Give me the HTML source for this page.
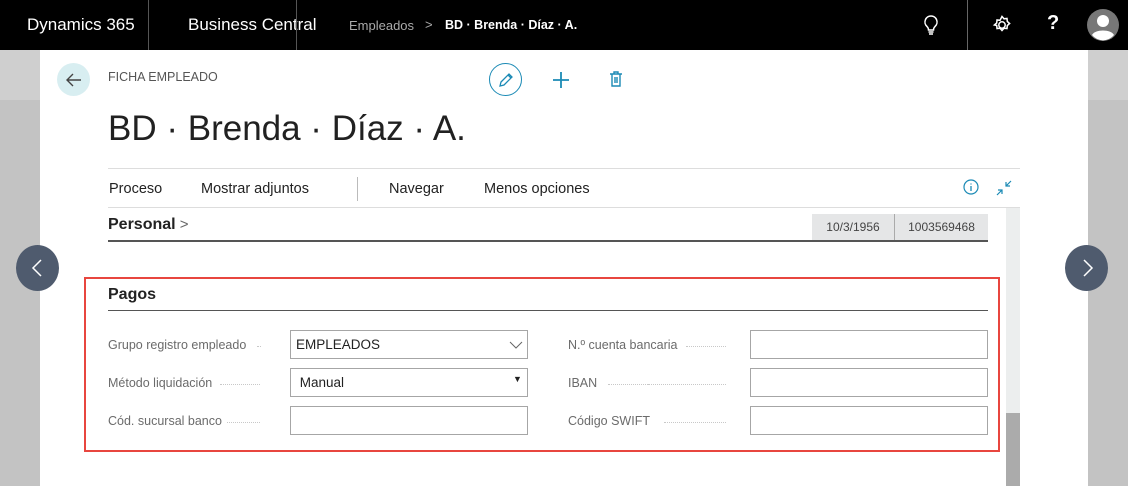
<!DOCTYPE html>
<html><head><meta charset="utf-8"><style>
*{margin:0;padding:0;box-sizing:border-box}
body{width:1128px;height:486px;overflow:hidden;font-family:"Liberation Sans",sans-serif;background:#c3c3c3;position:relative}
.a{position:absolute}
.top{left:0;top:0;width:1128px;height:50px;background:#000;color:#fff}
.card{left:40px;top:50px;width:1048px;height:436px;background:#fff}
.lbl{font-size:12.5px;color:#6b6b6b;white-space:nowrap}
.dots{border-bottom:1.5px dotted #c8c8c8;height:1px}
.inp{border:1px solid #a6a6a6;height:29px;background:#fff;font-size:13.5px;color:#222;padding:6px 5px}
</style></head><body>
<div class="a" style="left:0;top:50px;width:40px;height:50px;background:#cfcfcf"></div>
<div class="a" style="left:1088px;top:50px;width:40px;height:50px;background:#cfcfcf"></div>
<div class="a top">
  <div class="a" style="left:27px;top:15px;font-size:17px">Dynamics 365</div>
  <div class="a" style="left:148px;top:0;width:1px;height:50px;background:#555"></div>
  <div class="a" style="left:188px;top:15px;font-size:17px">Business Central</div>
  <div class="a" style="left:296px;top:0;width:1px;height:50px;background:#555"></div>
  <div class="a" style="left:349px;top:18px;font-size:13px;color:#aaa">Empleados</div>
  <div class="a" style="left:425px;top:17px;font-size:13px;color:#aaa">&gt;</div>
  <div class="a" style="left:445px;top:18px;font-size:12.5px;font-weight:bold">BD · Brenda · Díaz · A.</div>
  <svg class="a" style="left:922px;top:14px" width="18" height="22" viewBox="0 0 18 22"><path d="M9 2a6 6 0 0 0-4 10.5c1 1 1.5 2 1.5 3.5h5c0-1.5.5-2.5 1.5-3.5A6 6 0 0 0 9 2z M6.5 18h5 M7 20h4" fill="none" stroke="#fff" stroke-width="1.5"/></svg>
  <div class="a" style="left:967px;top:0;width:1px;height:50px;background:#666"></div>
  <svg class="a" style="left:992px;top:15px" width="20" height="20" viewBox="0 0 20 20"><path d="M10 1.5l2 2.3 3-.3.3 3 2.3 2-2.3 2-.3 3-3-.3-2 2.3-2-2.3-3 .3-.3-3L2.4 10 4.7 8 5 5l3 .3z" fill="none" stroke="#fff" stroke-width="1.5"/><circle cx="10" cy="10" r="3.2" fill="none" stroke="#fff" stroke-width="1.5"/></svg>
  <div class="a" style="left:1047px;top:12px;font-size:20px;font-weight:bold">?</div>
  <svg class="a" style="left:1087px;top:9px" width="32" height="32" viewBox="0 0 32 32"><circle cx="16" cy="16" r="16" fill="#777"/><circle cx="16" cy="12" r="6" fill="#fff"/><path d="M5 26c3-6 19-6 22 0a14 14 0 0 1-22 0z" fill="#fff"/></svg>
</div>
<div class="a card">
  <div class="a" style="left:17px;top:13px;width:33px;height:33px;border-radius:50%;background:#d8eef1"></div>
  <svg class="a" style="left:24px;top:20px" width="20" height="20" viewBox="0 0 20 20"><path d="M17 10H3M9 4l-6 6 6 6" fill="none" stroke="#444" stroke-width="1.4"/></svg>
  <div class="a" style="left:68px;top:20px;font-size:12.5px;color:#555">FICHA EMPLEADO</div>
  <div class="a" style="left:449px;top:13px;width:33px;height:33px;border-radius:50%;border:1.5px solid #1b8ab5"></div>
  <svg class="a" style="left:457px;top:21px" width="18" height="18" viewBox="0 0 18 18"><path d="M3 15l1-4 8-8 3 3-8 8z M11 4l3 3" fill="none" stroke="#1b8ab5" stroke-width="1.3"/></svg>
  <svg class="a" style="left:512px;top:21px" width="18" height="18" viewBox="0 0 18 18"><path d="M9 1v16M1 9h16" stroke="#1b8ab5" stroke-width="1.8"/></svg>
  <svg class="a" style="left:568px;top:20px" width="16" height="18" viewBox="0 0 16 18"><path d="M2 4h12M6 4V2h4v2M4 4v12h8V4M7 7v6M9 7v6" fill="none" stroke="#1b8ab5" stroke-width="1.4"/></svg>
  <div class="a" style="left:68px;top:59px;font-size:35px;color:#212121">BD · Brenda · Díaz · A.</div>
  <div class="a" style="left:68px;top:118px;width:912px;height:1px;background:#ddd"></div>
  <div class="a" style="left:69px;top:131px;font-size:14.5px;color:#222">Proceso</div>
  <div class="a" style="left:161px;top:131px;font-size:14.5px;color:#222">Mostrar adjuntos</div>
  <div class="a" style="left:317px;top:127px;width:1px;height:24px;background:#bbb"></div>
  <div class="a" style="left:349px;top:131px;font-size:14.5px;color:#222">Navegar</div>
  <div class="a" style="left:444px;top:131px;font-size:14.5px;color:#222">Menos opciones</div>
  <svg class="a" style="left:923px;top:129px" width="16" height="16" viewBox="0 0 16 16"><circle cx="8" cy="8" r="7" fill="none" stroke="#1b8ab5" stroke-width="1.2"/><path d="M8 7v5M8 4.5v1" stroke="#1b8ab5" stroke-width="1.3"/></svg>
  <svg class="a" style="left:955px;top:129px" width="18" height="18" viewBox="0 0 18 18"><path d="M2 16l5-5M3 11h4v4M16 2l-5 5M11 3v4h4" fill="none" stroke="#1b8ab5" stroke-width="1.2"/></svg>
  <div class="a" style="left:68px;top:157px;width:912px;height:1px;background:#ddd"></div>
  <div class="a" style="left:966px;top:158px;width:14px;height:278px;background:#eceeee"></div>
  <div class="a" style="left:966px;top:363px;width:14px;height:73px;background:#ababab"></div>
  <div class="a" style="left:68px;top:166px;font-size:16px;font-weight:bold;color:#222">Personal<span style="font-weight:normal;color:#666;font-size:15px"> &gt;</span></div>
  <div class="a" style="left:772px;top:164px;width:82px;height:26px;background:#e5e6e7;font-size:12px;color:#444;text-align:center;line-height:26px">10/3/1956</div>
  <div class="a" style="left:854px;top:164px;width:1px;height:26px;background:#aaa"></div>
  <div class="a" style="left:855px;top:164px;width:93px;height:26px;background:#e5e6e7;font-size:12px;color:#444;text-align:center;line-height:26px">1003569468</div>
  <div class="a" style="left:68px;top:190px;width:880px;height:2px;background:#555"></div>
  <div class="a" style="left:44px;top:227px;width:916px;height:175px;border:2px solid #e8463f"></div>
  <div class="a" style="left:68px;top:236px;font-size:16px;font-weight:bold;color:#222">Pagos</div>
  <div class="a" style="left:68px;top:260px;width:880px;height:1px;background:#555"></div>

  <div class="a lbl" style="left:68px;top:288px">Grupo registro empleado</div>
  <div class="a dots" style="left:217px;top:296px;width:4px"></div>
  <div class="a inp" style="left:250px;top:280px;width:238px">EMPLEADOS</div>
  <svg class="a" style="left:469px;top:290px" width="14" height="10" viewBox="0 0 14 10"><path d="M1 2l6 6 6-6" fill="none" stroke="#666" stroke-width="1"/></svg>
  <div class="a lbl" style="left:68px;top:326px">Método liquidación</div>
  <div class="a dots" style="left:180px;top:334px;width:40px"></div>
  <div class="a inp" style="left:250px;top:318px;width:238px">&nbsp;Manual</div>
  <div class="a" style="left:473px;top:324px;font-size:9px;color:#222">▼</div>
  <div class="a lbl" style="left:68px;top:364px">Cód. sucursal banco</div>
  <div class="a dots" style="left:187px;top:372px;width:33px"></div>
  <div class="a inp" style="left:250px;top:356px;width:238px"></div>

  <div class="a lbl" style="left:528px;top:288px">N.º cuenta bancaria</div>
  <div class="a dots" style="left:646px;top:296px;width:40px"></div>
  <div class="a inp" style="left:710px;top:280px;width:238px"></div>
  <div class="a lbl" style="left:528px;top:326px">IBAN</div>
  <div class="a dots" style="left:528px;top:334px;width:158px;left:608px;width:78px"></div>
  <div class="a dots" style="left:568px;top:334px;width:118px"></div>
  <div class="a inp" style="left:710px;top:318px;width:238px"></div>
  <div class="a lbl" style="left:528px;top:364px">Código SWIFT</div>
  <div class="a dots" style="left:624px;top:372px;width:62px"></div>
  <div class="a inp" style="left:710px;top:356px;width:238px"></div>
</div>
<div class="a" style="left:16px;top:245px;width:43px;height:46px;border-radius:50%;background:#4f5b6e"></div>
<svg class="a" style="left:30px;top:259px" width="14" height="18" viewBox="0 0 14 18"><path d="M11 1L3 9l8 8" fill="none" stroke="#fff" stroke-width="1.5"/></svg>
<div class="a" style="left:1065px;top:245px;width:43px;height:46px;border-radius:50%;background:#4f5b6e"></div>
<svg class="a" style="left:1081px;top:259px" width="14" height="18" viewBox="0 0 14 18"><path d="M3 1l8 8-8 8" fill="none" stroke="#fff" stroke-width="1.5"/></svg>
</body></html>
